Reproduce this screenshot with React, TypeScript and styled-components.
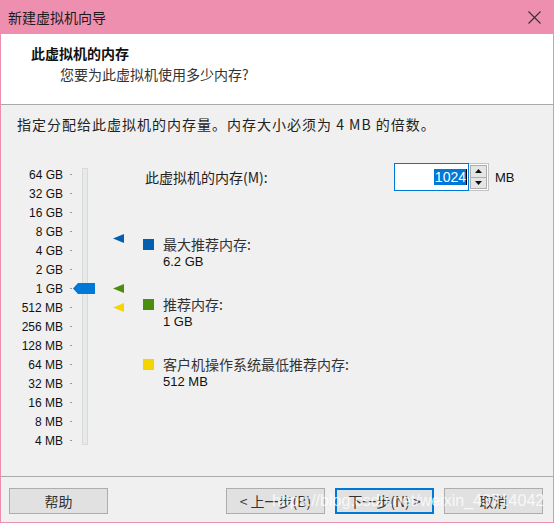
import React from 'react';
import styled, { createGlobalStyle } from 'styled-components';

const CJK = `"Noto Sans CJK SC", "Noto Sans", sans-serif`;
const LATIN = `"Liberation Sans", Arial, "Noto Sans CJK SC", sans-serif`;
const PINK = '#EF8FB0';

const GlobalStyle = createGlobalStyle`
  html, body { margin: 0; padding: 0; background: #f0f0f0; }
  body { width: 554px; height: 523px; overflow: hidden; font-family: ${CJK}; }
  * { box-sizing: border-box; }
`;

const Window = styled.div`
  position: relative;
  width: 554px;
  height: 523px;
  display: flex;
  flex-direction: column;
  background: #f0f0f0;
`;

const TitleBar = styled.div`
  height: 34px;
  flex: none;
  background: ${PINK};
  display: flex;
  align-items: center;
  justify-content: space-between;
  padding: 0 13px 0 8px;
`;

const TitleText = styled.span`
  font-family: ${CJK};
  font-size: 14px;
  color: #1a1a1a;
`;

const Frame = styled.div`
  flex: 1;
  display: flex;
  flex-direction: column;
  border: 1px solid ${PINK};
  border-top: none;
  min-height: 0;
`;

const Header = styled.div`
  height: 71px;
  flex: none;
  background: #fff;
  border-bottom: 1px solid #a9a9a9;
  padding: 9px 0 0 30px;
`;

const HeaderTitle = styled.div`
  font-family: ${CJK};
  font-size: 14px;
  font-weight: 700;
  line-height: 20px;
  color: #111;
`;

const HeaderSub = styled.div`
  font-family: ${CJK};
  font-size: 14px;
  line-height: 20px;
  margin: 1px 0 0 29px;
  color: #333;
`;

const Body = styled.div`
  flex: 1;
  display: flex;
  flex-direction: column;
  min-height: 0;
`;

const Instruction = styled.div`
  padding: 9px 0 0 16px;
  font-size: 14px;
  line-height: 20px;
  letter-spacing: 1px;
  color: #222;
`;

const Main = styled.div`
  margin-top: 26px;
  display: flex;
  flex: 1;
`;

const ScaleBox = styled.div`
  position: relative;
  width: 142px;
  flex: none;
  display: flex;
  align-items: flex-start;
`;

const Labels = styled.div`
  padding-top: 5px;
  display: flex;
  flex-direction: column;
`;

const ScaleRow = styled.div`
  height: 19px;
  display: flex;
  align-items: center;
`;

const ScaleLabel = styled.span`
  width: 62px;
  text-align: right;
  font-family: ${LATIN};
  font-size: 12px;
  color: #111;
`;

const Tick = styled.span`
  margin-left: 7px;
  width: 2px;
  height: 1px;
  background: #9a9a9a;
`;

const Track = styled.div`
  position: relative;
  margin: 8px 0 0 10px;
  width: 6px;
  height: 277px;
  background: #e7eaea;
  border: 1px solid #d9d9d9;
`;

const Thumb = styled.svg`
  position: absolute;
  left: -10px;
  width: 22px;
  height: 11px;
  display: block;
`;

const Marker = styled.svg`
  position: absolute;
  left: 112px;
  width: 11px;
  height: 9px;
  display: block;
`;

const Right = styled.div`
  flex: 1;
  display: flex;
  flex-direction: column;
`;

const MemRow = styled.div`
  margin-top: 3px;
  display: grid;
  grid-template-columns: 251px 75px 20px auto;
  align-items: center;
  height: 28px;
`;

const MemLabel = styled.span`
  padding-left: 2px;
  font-size: 14px;
  color: #222;
`;

const InputBox = styled.div`
  height: 28px;
  background: #fff;
  border: 1px solid #0078d7;
  display: flex;
  align-items: center;
  justify-content: flex-end;
  padding-right: 1px;
`;

const Selected = styled.span`
  background: #0078d7;
  color: #fff;
  font-family: "Liberation Sans", Arial, sans-serif;
  font-size: 14px;
  line-height: 16px;
  padding: 0 0 0 1px;
  border-right: 1px solid #000;
`;

const Spinner = styled.div`
  height: 28px;
  display: flex;
  flex-direction: column;
  border: 1px solid #c2c2c2;
  border-left: none;
  background: #fff;
`;

const SpinButton = styled.div`
  flex: 1;
  display: flex;
  align-items: center;
  justify-content: center;
  background: #e5e5e5;
  border: 1px solid #adadad;
  margin: 0 1px;
  & + & { border-top: none; margin-bottom: 1px; }
  &:first-child { margin-top: 1px; }
`;

const Unit = styled.span`
  margin-left: 6px;
  font-family: ${LATIN};
  font-size: 13px;
  color: #111;
`;

const Legend = styled.div`
  margin-top: 44px;
  display: flex;
  flex-direction: column;
  gap: 24px;
`;

const LegendItem = styled.div`
  display: flex;
  flex-direction: column;
`;

const LegendLabel = styled.div`
  display: flex;
  align-items: center;
  gap: 9px;
  height: 18px;
  font-size: 14px;
  color: #333;
`;

const Swatch = styled.span<{ $color: string }>`
  width: 11px;
  height: 11px;
  background: ${(p) => p.$color};
  flex: none;
`;

const LegendValue = styled.div`
  padding-left: 20px;
  line-height: 18px;
  font-family: ${LATIN};
  font-size: 13px;
  color: #111;
`;

const Footer = styled.div`
  height: 46px;
  flex: none;
  border-top: 1px solid #a9a9a9;
  display: flex;
  align-items: flex-start;
  padding: 11px 10px 0 8px;
`;

const Spacer = styled.div`
  flex: 1;
`;

const Button = styled.button<{ $default?: boolean }>`
  width: 99px;
  height: 26px;
  margin-left: ${(p) => (p.$default ? '10px' : '0')};
  margin-right: ${(p) => (p.$default ? '10px' : '0')};
  background: #e1e1e1;
  border: ${(p) => (p.$default ? '2px solid #0078d7' : '1px solid #adadad')};
  font-family: ${CJK};
  font-size: 14px;
  color: #333;
  padding: 0;
  display: flex;
  align-items: center;
  justify-content: center;
`;

const Watermark = styled.div`
  position: absolute;
  left: 272px;
  top: 492px;
  font-family: "Liberation Sans", Arial, sans-serif;
  font-size: 16px;
  color: rgba(255, 255, 255, 0.78);
  pointer-events: none;
  white-space: nowrap;
`;

const scale = ['64 GB', '32 GB', '16 GB', '8 GB', '4 GB', '2 GB', '1 GB', '512 MB', '256 MB', '128 MB', '64 MB', '32 MB', '16 MB', '8 MB', '4 MB'];

// center Y (relative to the scale box top) of a memory value in MB
const centerY = (mb: number) => 14.5 + Math.log2(65536 / mb) * 19;
const TRACK_TOP = 8;

const markers = [
  { mb: 6.2 * 1024, color: '#005FB0' },
  { mb: 1024, color: '#4A8D0F' },
  { mb: 512, color: '#F6D400' },
];

const legend = [
  { color: '#005FB0', label: '最大推荐内存:', value: '6.2 GB' },
  { color: '#4A8D0F', label: '推荐内存:', value: '1 GB' },
  { color: '#F6D400', label: '客户机操作系统最低推荐内存:', value: '512 MB' },
];

export default function App() {
  const memory = 1024;
  return (
    <>
      <GlobalStyle />
      <Window>
        <TitleBar>
          <TitleText>新建虚拟机向导</TitleText>
          <svg width="13" height="13" viewBox="0 0 13 13">
            <path d="M0.5 0.5 L12.5 12.5 M12.5 0.5 L0.5 12.5" stroke="#333" strokeWidth="1.1" fill="none" />
          </svg>
        </TitleBar>
        <Frame>
          <Header>
            <HeaderTitle>此虚拟机的内存</HeaderTitle>
            <HeaderSub>您要为此虚拟机使用多少内存?</HeaderSub>
          </Header>
          <Body>
            <Instruction>指定分配给此虚拟机的内存量。内存大小必须为 4 MB 的倍数。</Instruction>
            <Main>
              <ScaleBox>
                <Labels>
                  {scale.map((s) => (
                    <ScaleRow key={s}>
                      <ScaleLabel>{s}</ScaleLabel>
                      <Tick />
                    </ScaleRow>
                  ))}
                </Labels>
                <Track>
                  <Thumb viewBox="0 0 22 11" style={{ top: centerY(memory) - TRACK_TOP - 1 - 5.5 }}>
                    <polygon points="0,5.5 5,0 22,0 22,11 5,11" fill="#0078D7" />
                  </Thumb>
                </Track>
                {markers.map((m) => (
                  <Marker key={m.color} viewBox="0 0 11 9" style={{ top: centerY(m.mb) - 4.5 }}>
                    <polygon points="0,4.5 11,0 11,9" fill={m.color} />
                  </Marker>
                ))}
              </ScaleBox>
              <Right>
                <MemRow>
                  <MemLabel>此虚拟机的内存(M):</MemLabel>
                  <InputBox>
                    <Selected>1024</Selected>
                  </InputBox>
                  <Spinner>
                    <SpinButton>
                      <svg width="7" height="4" viewBox="0 0 7 4"><polygon points="3.5,0 7,4 0,4" fill="#111" /></svg>
                    </SpinButton>
                    <SpinButton>
                      <svg width="7" height="4" viewBox="0 0 7 4"><polygon points="0,0 7,0 3.5,4" fill="#111" /></svg>
                    </SpinButton>
                  </Spinner>
                  <Unit>MB</Unit>
                </MemRow>
                <Legend>
                  {legend.map((l) => (
                    <LegendItem key={l.label}>
                      <LegendLabel>
                        <Swatch $color={l.color} />
                        {l.label}
                      </LegendLabel>
                      <LegendValue>{l.value}</LegendValue>
                    </LegendItem>
                  ))}
                </Legend>
              </Right>
            </Main>
          </Body>
          <Footer>
            <Button>帮助</Button>
            <Spacer />
            <Button>&lt; 上一步(B)</Button>
            <Button $default>下一步(N) &gt;</Button>
            <Button>取消</Button>
          </Footer>
        </Frame>
        <Watermark>https://blog.csdn.net/weixin_43714042</Watermark>
      </Window>
    </>
  );
}
